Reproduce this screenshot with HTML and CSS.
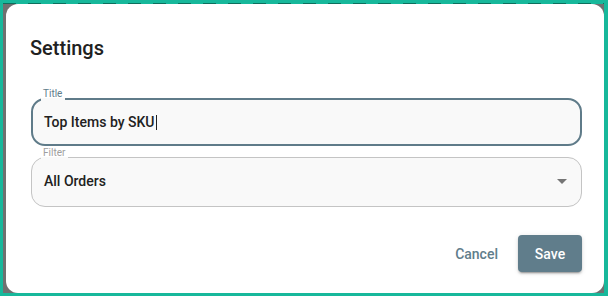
FILE: index.html
```html
<!DOCTYPE html>
<html>
<head>
<meta charset="utf-8">
<link rel="stylesheet" href="styles.css">
</head>
<body>
<div class="frame">
  <div class="dialog">
    <h2 class="dialog-title">Settings</h2>
    <div class="fields">
      <fieldset class="field field-focused">
        <legend class="field-label">Title</legend>
        <div class="field-value">Top Items by SKU<span class="caret"></span></div>
      </fieldset>
      <fieldset class="field field-select">
        <legend class="field-label">Filter</legend>
        <div class="field-value">
          <span class="select-text">All Orders</span>
          <svg class="select-arrow" width="10" height="5" viewBox="0 0 10 5"><path d="M0 0h10L5 5z" fill="#757575"/></svg>
        </div>
      </fieldset>
    </div>
    <div class="actions">
      <button class="btn btn-text">Cancel</button>
      <button class="btn btn-primary">Save</button>
    </div>
  </div>
</div>
</body>
</html>
```
FILE: styles.css
```css
html, body {
  margin: 0;
  padding: 0;
}
body {
  width: 608px;
  height: 296px;
  overflow: hidden;
  font-family: Roboto, "Noto Sans", sans-serif;
}
.frame {
  box-sizing: border-box;
  width: 608px;
  height: 296px;
  border-style: solid;
  border-color: #17b89b;
  border-width: 3px 4px 3px 3px;
  padding: 1px 0 0 3px;
  background:
    repeating-linear-gradient(to right, #0c6f5d 0 13px, #17b89b 13px 25px) top left / 100% 1px no-repeat,
    #707070;
  display: flex;
}
.dialog {
  flex: 1;
  background: #fff;
  border-radius: 12px;
  padding: 0 22px 0 25px;
  display: flex;
  flex-direction: column;
}
.dialog-title {
  margin: 28px 0 0 -1px;
  font-size: 20px;
  line-height: 32px;
  font-weight: 500;
  color: #212121;
}
.fields {
  margin-top: 25px;
  display: flex;
  flex-direction: column;
  gap: 2px;
}
.field {
  margin: 0;
  padding: 0;
  min-width: 0;
  box-sizing: border-box;
  background: #f9f9f9;
  border-radius: 14px;
}
.field-focused {
  border: 2px solid #5f7b89;
}
.field-select {
  border: 1px solid #c4c4c4;
}
.field-label {
  font-size: 10px;
  line-height: 10px;
  padding: 0 3px 10px 2px;
  margin-left: 8px;
  color: #607d8b;
}
.field-select .field-label {
  padding-bottom: 9px;
  margin-left: 9px;
  color: #9e9e9e;
}
.field-value {
  font-size: 14px;
  line-height: 20px;
  font-weight: 500;
  color: #212121;
  display: flex;
  align-items: center;
}
.field-focused .field-value {
  padding: 3px 12px 12px 11px;
}
.field-select .field-value {
  padding: 4px 14px 15px 12px;
}
.caret {
  display: inline-block;
  width: 1px;
  height: 15px;
  background: #212121;
  margin-left: 1px;
}
.select-text {
  flex: 1;
}
.select-arrow {
  display: block;
}
.actions {
  margin-top: 28px;
  display: flex;
  justify-content: flex-end;
  gap: 12px;
}
.btn {
  font-family: Roboto, "Noto Sans", sans-serif;
  font-size: 14px;
  font-weight: 500;
  line-height: 20px;
  border: none;
  border-radius: 4px;
  height: 37px;
  padding: 0 8px;
  cursor: pointer;
}
.btn-text {
  background: transparent;
  color: #607d8b;
}
.btn-primary {
  background: #607d8b;
  color: #fff;
  width: 64px;
  box-shadow: 0 3px 1px -2px rgba(0,0,0,0.2), 0 2px 2px 0 rgba(0,0,0,0.14), 0 1px 5px 0 rgba(0,0,0,0.12);
}
```
